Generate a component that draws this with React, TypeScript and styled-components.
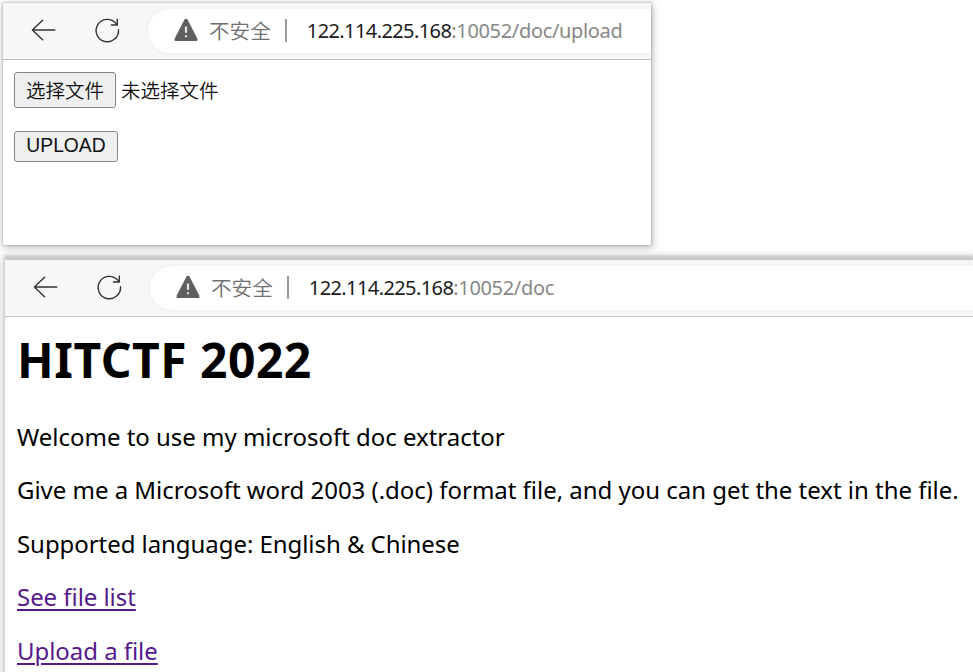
import React from 'react';
import styled, { createGlobalStyle } from 'styled-components';

const GlobalStyle = createGlobalStyle`
  * { box-sizing: border-box; }
  body {
    margin: 0;
    background: #fff;
    overflow: hidden;
    font-family: "Noto Sans", "Noto Sans CJK SC", sans-serif;
  }
`;

const Desktop = styled.div`
  display: flex;
  flex-direction: column;
  align-items: flex-start;
  width: 973px;
  height: 672px;
  padding-top: 3px;
  overflow: hidden;
`;

const UploadWindow = styled.section`
  flex: none;
  width: 648px;
  height: 242px;
  margin-left: 3px;
  background: #fff;
  box-shadow: 0 0 2px 1px rgba(0, 0, 0, 0.16), 1px 2px 8px 1px rgba(0, 0, 0, 0.22);
`;

const DocWindow = styled.section`
  flex: none;
  width: 968px;
  height: 430px;
  margin: 15px 0 0 5px;
  background: #fff;
  box-shadow: 0 -4px 2px 1px rgba(0, 0, 0, 0.13), 0 0 9px 4px rgba(0, 0, 0, 0.14);
`;

const Toolbar = styled.header<{ $line: string }>`
  display: flex;
  align-items: center;
  height: 57px;
  padding: 0 0 1px 27px;
  background: #f7f7f7;
  border-bottom: 1px solid ${(p) => p.$line};
`;

const ToolIcon = styled.svg<{ $gap: number }>`
  flex: none;
  width: 28px;
  height: 28px;
  margin: 0 ${(p) => p.$gap}px 1px 0;
  fill: none;
  stroke: #333;
  stroke-width: 1.4;
  stroke-linecap: round;
  stroke-linejoin: round;
`;

const AddressBar = styled.div`
  display: flex;
  flex: 1;
  align-items: center;
  height: 44px;
  padding-left: 25px;
  border-radius: 22px 0 0 22px;
  background: #fff;
  box-shadow: 0 0 5px rgba(0, 0, 0, 0.05);
  white-space: nowrap;
  font-size: 20px;
  line-height: 28px;
`;

const WarningIcon = styled.svg`
  width: 26px;
  height: 24px;
  margin: 0 10px 1px 0;
`;

const Insecure = styled.span`
  margin-bottom: 2px;
  color: #707070;
  font-family: "Noto Sans CJK SC", sans-serif;
  font-size: 20.6px;
  font-weight: 350;
`;

const Divider = styled.i`
  width: 2px;
  height: 23px;
  margin: 0 20px 0 14px;
  background: #999;
`;

const Host = styled.span`
  color: #1c1c1c;
  letter-spacing: -0.59px;
`;

const Path = styled.span`
  color: #888;
  letter-spacing: -0.34px;
`;

const UploadForm = styled.form`
  display: flex;
  flex-direction: column;
  align-items: flex-start;
  gap: 23px;
  padding: 12px 0 0 11px;
`;

const FileField = styled.div`
  display: flex;
  align-items: center;
  gap: 5px;
  color: #111;
  font-family: "Noto Sans CJK SC", sans-serif;
  font-size: 19.5px;
  font-weight: 350;
  line-height: 30px;
`;

const FormButton = styled.button<{ $width: number; $height: number }>`
  width: ${(p) => p.$width}px;
  height: ${(p) => p.$height}px;
  padding: 0;
  border: 1px solid #858585;
  border-radius: 3px;
  background: #efefef;
  color: #111;
  font: inherit;
  line-height: 1;
`;

const SubmitButton = styled(FormButton)`
  padding-bottom: 1px;
  font: 19.3px/1 "Liberation Sans", sans-serif;
`;

const Article = styled.main`
  padding: 11px 0 0 12px;
  color: #000;
  white-space: nowrap;
`;

const Title = styled.h1`
  margin: 0 0 28.6px;
  font-size: 48px;
  font-weight: 700;
  line-height: 64px;
  letter-spacing: 0.5px;
`;

const Paragraph = styled.p<{ $tracking?: number }>`
  margin: 0 0 21.6px;
  font-size: 24px;
  line-height: 32px;
  letter-spacing: ${(p) => p.$tracking ?? 0}px;
`;

const VisitedLink = styled.a`
  color: #551a8b;
  text-decoration: underline;
  text-decoration-thickness: 2px;
  text-underline-offset: 3px;
  text-decoration-skip-ink: auto;
`;

function BrowserBar({ path, line }: { path: string; line: string }) {
  return (
    <Toolbar $line={line}>
      <ToolIcon $gap={36} viewBox="0 0 28 28">
        <path d="M24.8 14H2.4M12.6 4.2 2.4 14l10.2 9.8" />
      </ToolIcon>
      <ToolIcon $gap={26} viewBox="0 0 28 28">
        <path d="M24.5 13.7a11.2 11.2 0 1 1-2.8-6.6l1.6 1.9M23.3 3.2V9h-5.9" />
      </ToolIcon>
      <AddressBar>
        <WarningIcon viewBox="0 0 26 24">
          <path
            d="M11.5 1.5Q13 0 14.5 1.5L24.3 20.4Q25 23 23 23H3Q1 23 1.7 20.4Z"
            fill="#5f5f5f"
          />
          <path d="M13 8.5v6.2M13 17.3v2" stroke="#e4e4e4" strokeWidth="2.2" />
        </WarningIcon>
        <Insecure>不安全</Insecure>
        <Divider />
        <Host>122.114.225.168</Host>
        <Path>{path}</Path>
      </AddressBar>
    </Toolbar>
  );
}

export default function App() {
  return (
    <>
      <GlobalStyle />
      <Desktop>
        <UploadWindow>
          <BrowserBar path=":10052/doc/upload" line="#bdbdbd" />
          <UploadForm>
            <FileField>
              <FormButton type="button" $width={102} $height={36}>
                选择文件
              </FormButton>
              <span>未选择文件</span>
            </FileField>
            <SubmitButton type="button" $width={104} $height={31}>
              UPLOAD
            </SubmitButton>
          </UploadForm>
        </UploadWindow>
        <DocWindow>
          <BrowserBar path=":10052/doc" line="#c8c8c8" />
          <Article>
            <Title>HITCTF 2022</Title>
            <Paragraph $tracking={-0.02}>Welcome to use my microsoft doc extractor</Paragraph>
            <Paragraph $tracking={-0.02}>
              Give me a Microsoft word 2003 (.doc) format file, and you can get the text in the file.
            </Paragraph>
            <Paragraph $tracking={-0.06}>Supported language: English &amp; Chinese</Paragraph>
            <Paragraph $tracking={-0.05}>
              <VisitedLink href="#list">See file list</VisitedLink>
            </Paragraph>
            <Paragraph $tracking={-0.05}>
              <VisitedLink href="#upload">Upload a file</VisitedLink>
            </Paragraph>
          </Article>
        </DocWindow>
      </Desktop>
    </>
  );
}
